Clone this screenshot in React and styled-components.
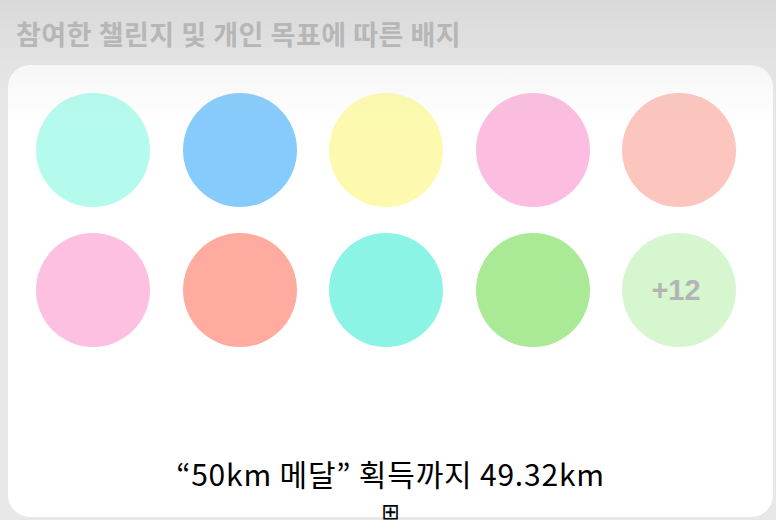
import styled, { createGlobalStyle } from 'styled-components';

const GlobalStyle = createGlobalStyle`
  html, body {
    margin: 0;
    padding: 0;
    background: #e8e8e8;
  }
  body {
    font-family: "Noto Sans CJK KR", "Noto Sans", sans-serif;
  }
`;

const badges = [
  '#b4fbee',
  '#85cbfc',
  '#fdfaaf',
  '#fcbde0',
  '#fcc5bd',
  '#fec0e1',
  '#ffab9f',
  '#8cf4e4',
  '#aae995',
];

function App() {
  return (
    <>
      <GlobalStyle />
      <Page>
        <Fade />
        <Title>참여한 챌린지 및 개인 목표에 따른 배지</Title>
        <Card>
          <BadgeGrid>
            {badges.map((color, i) => (
              <Badge key={i} $color={color} />
            ))}
            <Badge $color="#d6f6d0">
              <More>+12</More>
            </Badge>
          </BadgeGrid>
          <Goal>“50km 메달” 획득까지 49.32km</Goal>
          <Tofu>⊞</Tofu>
        </Card>
      </Page>
    </>
  );
}

const Page = styled.div`
  position: relative;
  width: 776px;
  height: 520px;
  overflow: hidden;
  display: flex;
  flex-direction: column;
`;

const Fade = styled.div`
  position: absolute;
  left: 0;
  top: 0;
  right: 0;
  height: 125px;
  background: linear-gradient(
    rgba(190, 190, 190, 0.35),
    rgba(200, 200, 200, 0.15) 55%,
    rgba(255, 255, 255, 0)
  );
  pointer-events: none;
  z-index: 2;
`;

const Title = styled.h2`
  margin: 16px 0 0 16px;
  height: 49px;
  font-size: 27px;
  font-weight: 700;
  letter-spacing: 0.5px;
  color: #b3b3b3;
  line-height: 36px;
  white-space: nowrap;
`;

const Card = styled.div`
  margin-left: 8px;
  width: 765px;
  height: 452px;
  box-sizing: border-box;
  background: #fff;
  border-radius: 22px;
  padding: 28px 0 0 28px;
  display: flex;
  flex-direction: column;
`;

const BadgeGrid = styled.div`
  display: grid;
  grid-template-columns: repeat(5, 114px);
  column-gap: 32.5px;
  row-gap: 26px;
`;

const Badge = styled.div`
  width: 114px;
  height: 114px;
  border-radius: 50%;
  background: ${(p) => p.$color};
  display: flex;
  align-items: center;
  justify-content: center;
`;

const More = styled.span`
  font-family: "Liberation Sans", Arial, sans-serif;
  font-weight: 700;
  font-size: 29px;
  color: #b4b4b4;
  margin-left: -6px;
`;

const Goal = styled.div`
  margin-top: 107px;
  margin-left: -28px;
  text-align: center;
  font-size: 30px;
  line-height: 38px;
  letter-spacing: 0.8px;
  color: #000;
`;

const Tofu = styled.div`
  margin-top: 9px;
  margin-left: -28px;
  text-align: center;
  font-family: "DejaVu Sans", sans-serif;
  font-size: 22px;
  line-height: 22px;
  color: #000;
`;

export default App;
